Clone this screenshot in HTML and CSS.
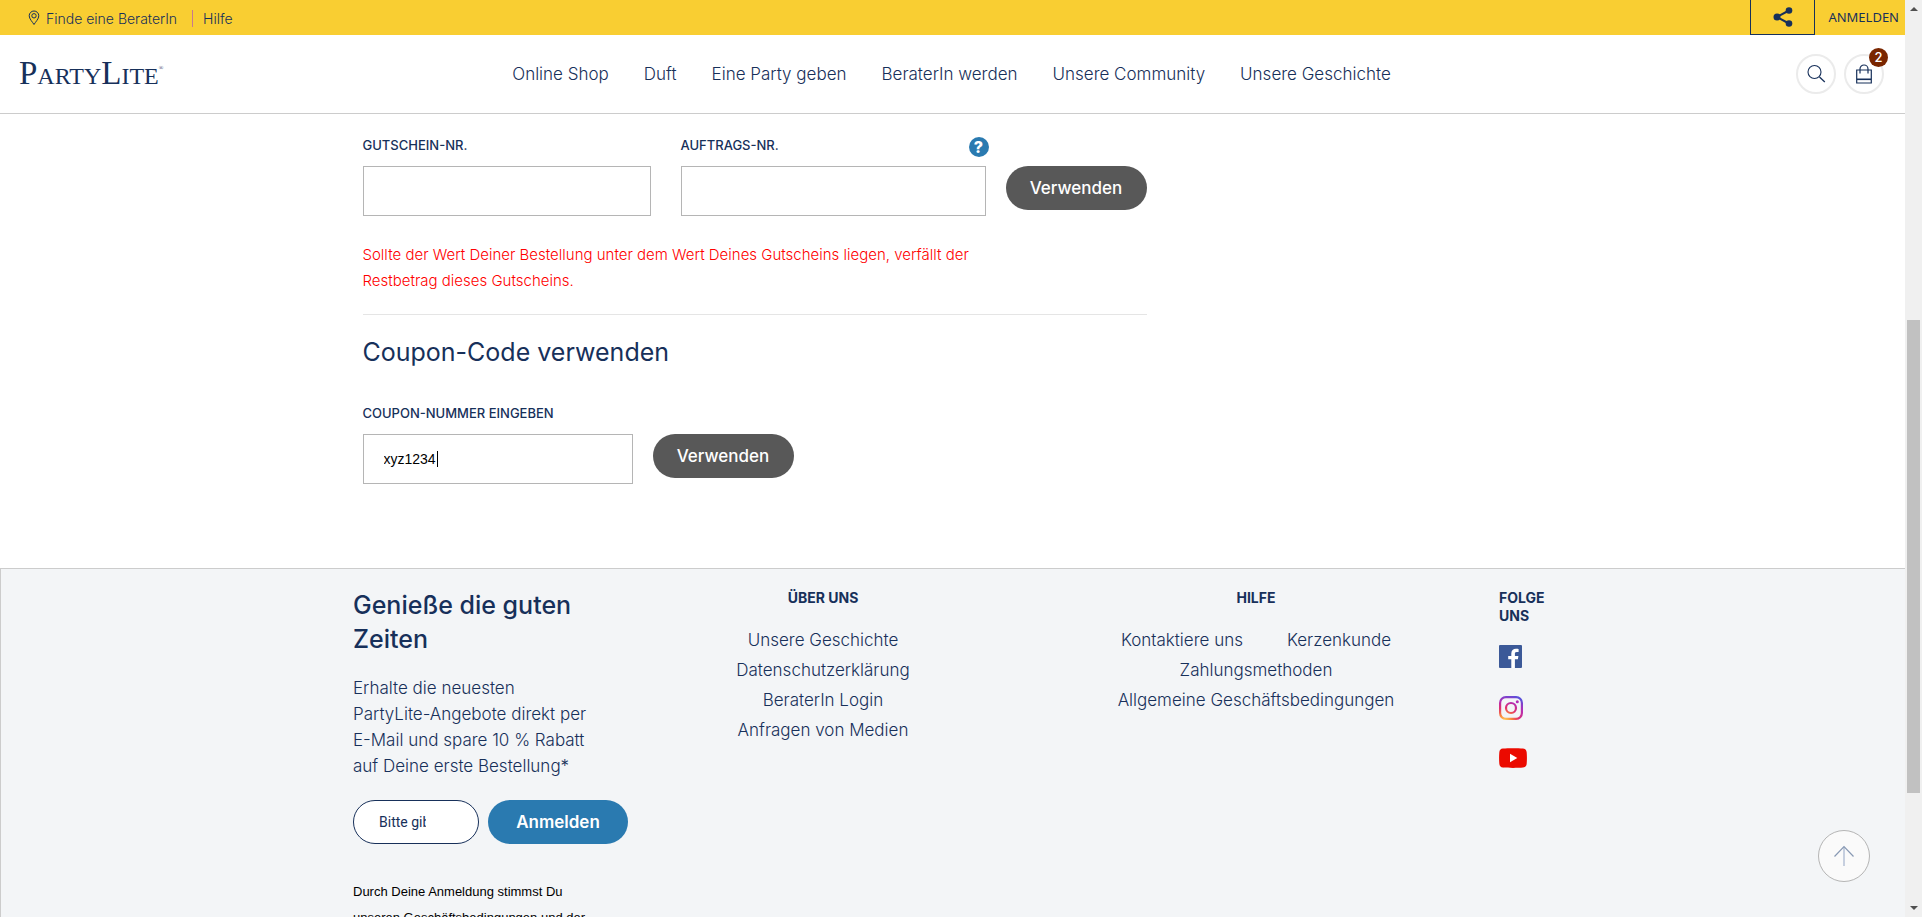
FILE: index.html
```html
<!DOCTYPE html>
<html lang="de">
<head>
<meta charset="utf-8">
<meta name="viewport" content="width=device-width, initial-scale=1">
<title>PartyLite – Warenkorb</title>
<link rel="stylesheet" href="styles.css">
</head>
<body>
<div class="page">
  <div class="topbar">
    <nav class="topbar-links" aria-label="Service">
      <a class="locator" href="#">
        <svg width="12" height="16" viewBox="0 0 12 16" fill="none" stroke="currentColor" aria-hidden="true"><path d="M6 14.500C4.500 12 1.200 8.800 1.200 5.800a4.800 4.800 0 0 1 9.600 0c0 3-3.300 6.200-4.800 8.700z"/><circle cx="6" cy="5.800" r="2.200"/></svg>
        Finde eine BeraterIn
      </a>
      <a class="help-link" href="#">Hilfe</a>
    </nav>
    <div class="account">
      <button class="share" type="button" aria-label="Teilen">
        <svg width="20" height="20" viewBox="0 0 20 20" aria-hidden="true"><path d="M16 3.500 4 10l12 6.500" fill="none" stroke="currentColor" stroke-width="2"/><g fill="currentColor"><circle cx="16" cy="3.500" r="3.300"/><circle cx="4" cy="10" r="3.500"/><circle cx="16" cy="16.500" r="3.300"/></g></svg>
      </button>
      <a class="login" href="#">ANMELDEN</a>
    </div>
  </div>

  <header class="header">
    <a class="logo" href="#" aria-label="PartyLite">P<span class="logo-small">ARTY</span>L<span class="logo-small">ITE</span><sup class="logo-mark">®</sup></a>
    <nav class="main-nav" aria-label="Hauptmenü">
      <a href="#">Online Shop</a>
      <a href="#">Duft</a>
      <a href="#">Eine Party geben</a>
      <a href="#">BeraterIn werden</a>
      <a href="#">Unsere Community</a>
      <a href="#">Unsere Geschichte</a>
    </nav>
    <div class="tools">
      <button class="round" type="button" aria-label="Suche">
        <svg width="20" height="20" viewBox="0 0 20 20" fill="none" stroke="currentColor" aria-hidden="true"><circle cx="8.500" cy="8" r="6.500" stroke-width="1.100"/><path d="m13.500 13 5.300 5" stroke-width="1.300"/></svg>
      </button>
      <button class="round" type="button" aria-label="Warenkorb, 2 Artikel">
        <svg width="16" height="20" viewBox="0 0 16 20" fill="none" stroke="currentColor" aria-hidden="true"><path d="M.7 6h14.600v13H.7zM4 9.500V5a4 4 0 0 1 8 0v4.500" stroke-width="1.200"/><path d="M1 15.300h14" stroke-width="1.600"/></svg>
        <span class="badge">2</span>
      </button>
    </div>
  </header>

  <main class="container content">
    <div class="column">
      <form class="voucher">
        <div class="field">
          <label for="voucher">GUTSCHEIN-NR.</label>
          <input class="box" id="voucher" type="text">
        </div>
        <div class="field">
          <label for="order">AUFTRAGS-NR.</label>
          <input class="box" id="order" type="text">
          <button class="hint" type="button" aria-label="Hilfe zur Auftragsnummer">?</button>
        </div>
        <button class="pill" type="button">Verwenden</button>
      </form>
      <p class="warning">Sollte der Wert Deiner Bestellung unter dem Wert Deines Gutscheins liegen, verfällt der Restbetrag dieses Gutscheins.</p>
      <h2 class="title">Coupon-Code verwenden</h2>
      <form class="coupon">
        <div class="field">
          <label for="coupon">COUPON-NUMMER EINGEBEN</label>
          <input class="box" id="coupon" type="text" value="xyz1234">
          <span class="caret"></span>
        </div>
        <button class="pill" type="button">Verwenden</button>
      </form>
    </div>
  </main>

  <footer class="footer">
    <div class="container footer-grid">
      <section class="newsletter">
        <h2>Genieße die guten Zeiten</h2>
        <p class="intro">Erhalte die neuesten<br>PartyLite-Angebote direkt per<br>E-Mail und spare 10 % Rabatt<br>auf Deine erste Bestellung*</p>
        <form class="signup">
          <input class="email" type="email" aria-label="E-Mail-Adresse" placeholder="Bitte gib Deine E-Mail-Adresse ein">
          <button class="pill pill-blue" type="button">Anmelden</button>
        </form>
        <p class="legal">Durch Deine Anmeldung stimmst Du<br>unseren Geschäftsbedingungen und der</p>
      </section>
      <section class="links">
        <h3>ÜBER UNS</h3>
        <ul>
          <li><a href="#">Unsere Geschichte</a></li>
          <li><a href="#">Datenschutzerklärung</a></li>
          <li><a href="#">BeraterIn Login</a></li>
          <li><a href="#">Anfragen von Medien</a></li>
        </ul>
      </section>
      <section class="links">
        <h3>HILFE</h3>
        <ul class="wrap">
          <li><a href="#">Kontaktiere uns</a></li>
          <li><a href="#">Kerzenkunde</a></li>
          <li><a href="#">Zahlungsmethoden</a></li>
          <li><a href="#">Allgemeine Geschäftsbedingungen</a></li>
        </ul>
      </section>
      <section class="social">
        <h3>FOLGE UNS</h3>
        <a href="#" aria-label="Facebook"><svg width="23" height="23" viewBox="0 0 23 23"><rect width="23" height="23" rx="1" fill="#3b5998"/><path d="M12.300 23v-8.700H9.200v-3.200h3.100V8.600c0-3.200 1.900-4.900 4.700-4.900 1.200 0 2.200.1 2.600.2v3h-1.900c-1.500 0-1.800.8-1.800 1.800v2.400h3.500l-.5 3.200h-3V23z" fill="#fff"/></svg></a>
        <a href="#" aria-label="Instagram"><svg width="24" height="24" viewBox="0 0 24 24" fill="none"><defs><radialGradient id="ig" gradientUnits="userSpaceOnUse" cx="6" cy="25" r="27"><stop offset="0" stop-color="#ffd75e"/><stop offset=".25" stop-color="#f9873c"/><stop offset=".5" stop-color="#e1306c"/><stop offset=".75" stop-color="#b32db5"/><stop offset="1" stop-color="#5851db"/></radialGradient></defs><g stroke="url(#ig)" stroke-width="2.200"><rect x="1.100" y="1.100" width="21.800" height="21.800" rx="5.800"/><circle cx="12" cy="12" r="5"/></g><circle cx="18.300" cy="5.700" r="1.500" fill="#b32db5"/></svg></a>
        <a href="#" aria-label="YouTube"><svg width="28" height="20" viewBox="0 0 28 20"><path d="M4 .5C9 0 19 0 24 .5c2.500.2 3.500 1.500 3.700 4 .3 4 .3 7 0 11-.2 2.500-1.200 3.800-3.700 4-5 .5-15 .5-20 0-2.500-.2-3.500-1.500-3.700-4-.3-4-.3-7 0-11C.5 2 1.500.7 4 .5z" fill="#eb0a00"/><path d="m11 5.800 7.300 4.200-7.300 4.200z" fill="#fff"/></svg></a>
      </section>
    </div>
  </footer>
  <a class="to-top" href="#" aria-label="Nach oben"><svg width="22" height="22" viewBox="0 0 22 22" fill="none" aria-hidden="true"><path d="M11 2v19" stroke="#c6cfdf" stroke-width="2"/><path d="m1.500 11.500 9.500-10 9.500 10" stroke="#8798b3" stroke-width="1.200"/></svg></a>
</div>
<div class="scrollbar" aria-hidden="true">
  <span class="arrow arrow-up"></span>
  <span class="track"><span class="thumb"></span></span>
  <span class="arrow arrow-down"></span>
</div>
</body>
</html>
```
FILE: styles.css
```css
* {
  box-sizing: border-box;
}

body {
  margin: 0;
  display: grid;
  grid-template-columns: minmax(0, 1fr) 17px;
  height: 100vh;
  overflow: hidden;
  background: #fff;
  color: #17305a;
  font-family: Inter, "Open Sans", sans-serif;
  font-size: 17px;
}

a {
  color: inherit;
  text-decoration: none;
}

button {
  padding: 0;
  border: 0;
  background: none;
  color: inherit;
  font: inherit;
  cursor: pointer;
}

h2,
h3,
p,
ul {
  margin: 0;
  padding: 0;
}

li {
  list-style: none;
}

svg {
  display: block;
}

.page {
  position: relative;
  display: flex;
  flex-direction: column;
  height: 100vh;
  overflow: hidden;
}

.container {
  width: 100%;
  max-width: 1200px;
  margin: 0 auto;
}

/* Top bar */
.topbar {
  display: flex;
  flex: none;
  justify-content: space-between;
  height: 35px;
  padding: 0 6px 0 28px;
  background: #f9ce32;
}

.topbar-links {
  display: flex;
  align-items: center;
  gap: 15px;
  padding-top: 1px;
  font-size: 14px;
  font-weight: 300;
}

.locator {
  display: flex;
  align-items: center;
  gap: 6px;
}

.help-link {
  padding-left: 10px;
  border-left: 1px solid #c7798e;
}

.account {
  display: flex;
  align-items: center;
  gap: 13px;
}

.share {
  display: grid;
  place-items: center;
  width: 65px;
  height: 35px;
  border: 1px solid #17305a;
  border-top: 0;
}

.login {
  padding-bottom: 2px;
  font-family: "Noto Sans", sans-serif;
  font-size: 13px;
  font-weight: 400;
}

/* Header */
.header {
  display: grid;
  flex: none;
  grid-template-columns: 1fr auto 1fr;
  align-items: center;
  height: 79px;
  padding: 0 21px 0 19px;
  border-bottom: 1px solid #ccc;
}

.logo {
  font-family: "Liberation Serif", serif;
  font-size: 33px;
  line-height: 40px;
  white-space: nowrap;
}

.logo-small {
  font-size: 24px;
}

.logo-mark {
  font-size: 6px;
  line-height: 1;
  vertical-align: 14px;
}

.main-nav {
  display: flex;
  gap: 35px;
  font-size: 17px;
  font-weight: 300;
}

.tools {
  display: flex;
  justify-content: flex-end;
  gap: 8px;
}

.round {
  position: relative;
  display: grid;
  place-items: center;
  width: 40px;
  height: 40px;
  border: 2px solid #ebebeb;
  border-radius: 50%;
}

.badge {
  position: absolute;
  top: -8px;
  right: -6px;
  width: 19px;
  height: 19px;
  border-radius: 50%;
  background: #7a2600;
  color: #fff;
  font-size: 13px;
  font-weight: 500;
  line-height: 19px;
  text-align: center;
}

/* Vouchers and coupons */
.content {
  flex: none;
  padding: 20px 10px 84px;
}

.column {
  max-width: 784px;
}

.voucher,
.coupon {
  display: grid;
  align-items: start;
  column-gap: 20px;
}

.voucher {
  grid-template-columns: 298fr 305fr 141px;
}

.coupon {
  grid-template-columns: 270px 141px;
}

.voucher .field:first-child {
  margin-right: 10px;
}

.field {
  position: relative;
}

.field label {
  display: block;
  padding-bottom: 10px;
  font-size: 13px;
  font-weight: 500;
  line-height: 22px;
}

.box {
  display: block;
  width: 100%;
  height: 50px;
  padding: 0 20px;
  border: 1px solid #b5b5b5;
  background: #fff;
  color: #000;
  font-family: "Liberation Sans", sans-serif;
  font-size: 14px;
}

.hint {
  position: absolute;
  top: 3px;
  right: -3px;
  width: 20px;
  height: 20px;
  border-radius: 50%;
  background: #2a7ab0;
  color: #fff;
  font-size: 16px;
  font-weight: 800;
  line-height: 20px;
}

.caret {
  position: absolute;
  top: 49px;
  left: 74px;
  width: 1px;
  height: 16px;
  background: #000;
}

.pill {
  height: 44px;
  border-radius: 22px;
  background: #585858;
  color: #fff;
  font-size: 17px;
  font-weight: 500;
}

.voucher .pill,
.coupon .pill {
  margin-top: 32px;
}

.warning {
  max-width: 620px;
  margin-top: 26px;
  color: #f00;
  font-size: 15px;
  font-weight: 300;
  line-height: 26px;
}

.title {
  margin-top: 20px;
  padding: 20px 0 33px;
  border-top: 1px solid #e5e5e5;
  font-size: 25px;
  font-weight: 400;
  line-height: 34px;
}

/* Footer */
.footer {
  flex: 1 0 auto;
  border: 1px solid #ccc;
  border-width: 1px 0 0 1px;
  background: #f3f5f7;
}

.footer-grid {
  display: grid;
  grid-template-columns: 280fr 380fr 486fr 54fr;
  padding-top: 19px;
}

.newsletter h2 {
  max-width: 240px;
  font-size: 25px;
  font-weight: 500;
  line-height: 34px;
}

.intro {
  margin-top: 19px;
  font-weight: 300;
  line-height: 26px;
}

.signup {
  display: grid;
  grid-template-columns: 126px 140px;
  gap: 9px;
  margin-top: 21px;
}

.email {
  width: 100%;
  height: 44px;
  padding: 0 52px 0 25px;
  border: 1px solid #17305a;
  border-radius: 22px;
  background: #fff;
  font-family: Roboto, sans-serif;
  font-size: 14px;
}

.email::placeholder {
  color: #17305a;
}

.pill-blue {
  background: #2a7ab0;
  font-weight: 600;
}

.legal {
  margin-top: 35px;
  color: #000;
  font-family: "Liberation Sans", sans-serif;
  font-size: 13px;
  line-height: 26px;
}

.footer h3 {
  font-size: 14px;
  font-weight: 700;
  line-height: 18px;
}

.links {
  padding-top: 1px;
  text-align: center;
}

.links ul {
  margin: 18px auto 0;
  font-weight: 300;
  line-height: 30px;
}

.wrap {
  display: flex;
  flex-wrap: wrap;
  justify-content: center;
  column-gap: 44px;
  max-width: 320px;
}

.social {
  display: flex;
  flex-direction: column;
  gap: 28px;
  padding-top: 1px;
}

.social h3 {
  margin-bottom: -8px;
}

.to-top {
  position: absolute;
  right: 35px;
  bottom: 35px;
  display: grid;
  place-items: center;
  width: 52px;
  height: 52px;
  border: 1px solid #b5b5b5;
  border-radius: 50%;
  background: #fafafa;
}

/* Scrollbar */
.scrollbar {
  display: flex;
  flex-direction: column;
  align-items: center;
  justify-content: space-between;
  height: 100vh;
  padding: 7px 2px;
  background: #f0f0f0;
}

.arrow {
  border: 4px solid transparent;
}

.arrow-up {
  border-top: 0;
  border-bottom-color: #505050;
}

.arrow-down {
  border-bottom: 0;
  border-top-color: #505050;
}

.track {
  display: grid;
  flex: 1;
  grid-template-rows: 309fr 473fr 113fr;
  width: 13px;
}

.thumb {
  grid-row: 2;
  background: #c1c1c1;
}
```
